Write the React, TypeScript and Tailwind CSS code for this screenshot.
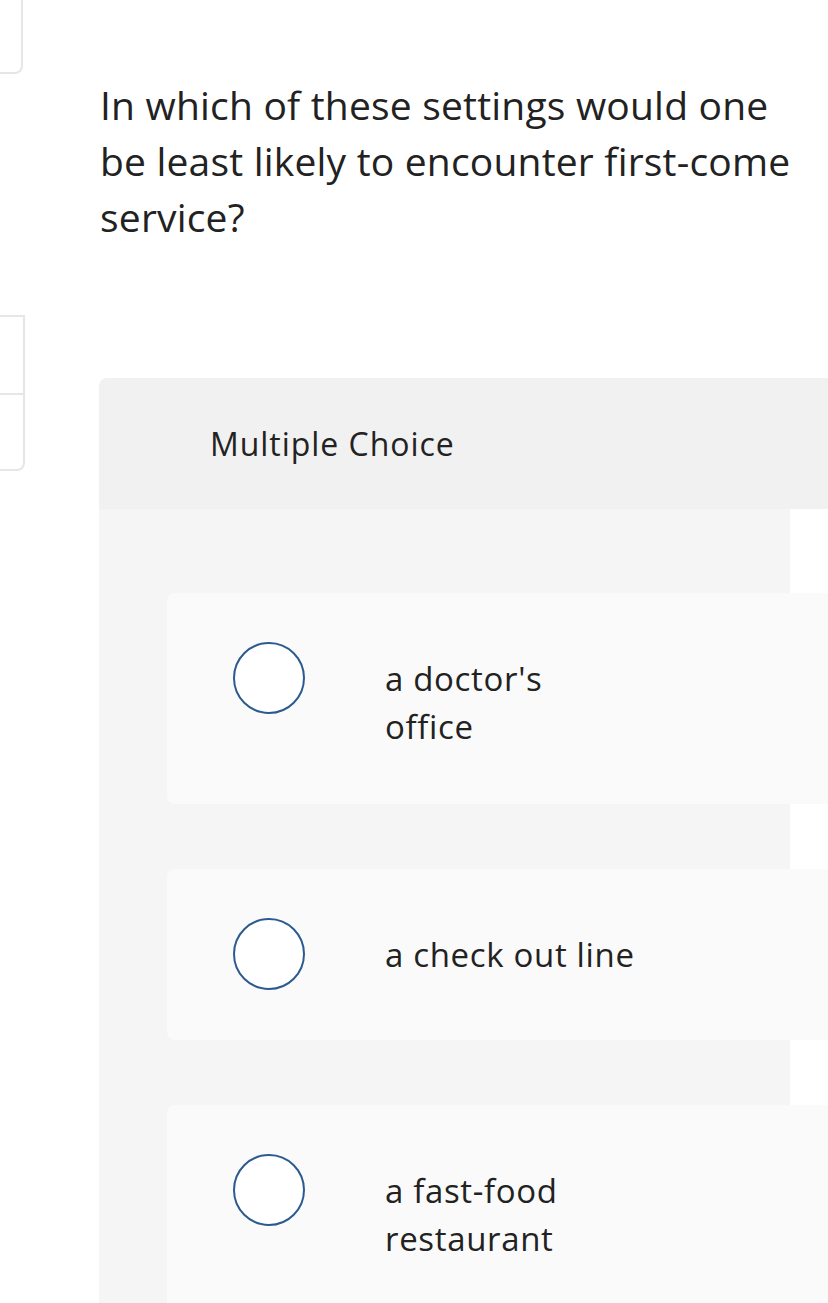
import React from 'react';

const OPTIONS = [
  { lines: ["a doctor's", 'office'] },
  { lines: ['a check out line'] },
  { lines: ['a fast-food', 'restaurant'] },
];

function Radio() {
  return <div className="w-[72px] h-[72px] shrink-0 rounded-full border-2 border-[#2c5a8f] bg-white" />;
}

export default function App() {
  return (
    <div
      className="w-[828px] h-[1303px] overflow-hidden bg-white flex text-[#222222] [font-variant-ligatures:none]"
      style={{ fontFamily: '"Open Sans", Lato, sans-serif' }}
    >
      {/* left rail, mostly off screen */}
      <div className="w-[25px] shrink-0 flex flex-col">
        <div className="w-[23px] h-[74px] border-r-2 border-b-2 border-[#e6e6e6] rounded-br-lg" />
        <div className="mt-[241px] w-[25px] h-[156px] border-t-2 border-r-2 border-b-2 border-[#e6e6e6] rounded-br-lg flex flex-col">
          <div className="h-[78px] border-b-2 border-[#e6e6e6]" />
        </div>
      </div>

      <div className="ml-[74px] flex flex-col min-w-0">
        <p className="pt-[77px] pl-[1px] text-[39px] leading-[56px] tracking-[0.005em] w-[729px] whitespace-nowrap">
          In which of these settings would one
          <br />
          be least likely to encounter first-come
          <br />
          service?
        </p>

        <div className="mt-[133px] w-[729px]">
          <div className="h-[131px] bg-[#f1f1f1] rounded-tl-lg flex items-center pl-[111px] text-[32px] tracking-[0.03em]">
            Multiple Choice
          </div>
          <div className="w-[691px] bg-[#f5f5f5] pt-[84px] pb-[200px] flex flex-col gap-[65px]">
            {OPTIONS.map((o, i) => (
              <div
                key={i}
                className="ml-[68px] w-[700px] shrink-0 bg-[#fafafa] rounded-lg pt-[49px] pb-[50px] pl-[66px] flex items-start gap-[80px]"
              >
                <Radio />
                <div className="pt-[13px] pb-[3px] text-[33px] leading-[48px] tracking-[0.02em] whitespace-nowrap">
                  {o.lines.map((l, j) => (
                    <div key={j}>{l}</div>
                  ))}
                </div>
              </div>
            ))}
          </div>
        </div>
      </div>
    </div>
  );
}
